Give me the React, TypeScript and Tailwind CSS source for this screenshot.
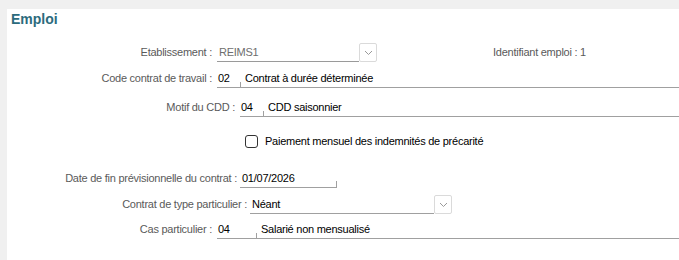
import React from "react";

const Chevron = () => (
  <svg width="9" height="6" viewBox="0 0 9 6" fill="none">
    <path d="M1 1 L4.5 4.5 L8 1" stroke="#9a9a9a" strokeWidth="1" />
  </svg>
);

const DropBtn = () => (
  <div className="w-[18px] h-[19px] border border-[#dadada] rounded-[2px] flex items-center justify-center bg-white">
    <Chevron />
  </div>
);

const Tick = () => <div className="self-end h-[5px] w-px bg-[#a0a0a0]" />;

export default function App() {
  return (
    <div className="w-[679px] h-[260px] bg-[#f0f0f0] pt-[9px] pl-[7px] font-['Liberation_Sans',Arial,sans-serif] text-[11px] tracking-[-0.25px] overflow-hidden">
      <div className="bg-white h-full flex flex-col">
        <div className="h-[34px] pl-[4px] pt-[1px] text-[14px] leading-[18px] font-bold tracking-normal text-[#2c6b7d]">Emploi</div>

        {/* Row 1 */}
        <div className="flex h-[19px] items-center">
          <div className="w-[205px] text-right text-[#5a5a5a]">Etablissement :</div>
          <div className="ml-[5px] w-[142px] h-[19px] border-b border-[#9a9a9a] flex items-center pl-[2px] text-[#6e6e6e]">REIMS1</div>
          <DropBtn />
          <div className="ml-[116px] text-[#5a5a5a]">Identifiant emploi : 1</div>
        </div>

        {/* Row 2 */}
        <div className="mt-[7px] flex h-[19px] items-center">
          <div className="w-[205px] text-right text-[#5a5a5a]">Code contrat de travail :</div>
          <div className="ml-[5px] flex-1 h-[19px] border-b border-[#a0a0a0] flex items-center text-black">
            <span className="w-[23px] pl-[1px]">02</span>
            <Tick />
            <span className="pl-[4px]">Contrat à durée déterminée</span>
          </div>
        </div>

        {/* Row 3 */}
        <div className="mt-[10px] flex h-[19px] items-center">
          <div className="w-[228px] text-right text-[#5a5a5a]">Motif du CDD :</div>
          <div className="ml-[5px] flex-1 h-[19px] border-b border-[#a0a0a0] flex items-center text-black">
            <span className="w-[23px] pl-[1px]">04</span>
            <Tick />
            <span className="pl-[4px]">CDD saisonnier</span>
          </div>
        </div>

        {/* Checkbox */}
        <div className="mt-[18px] flex h-[13px] items-center">
          <div className="ml-[238px] w-[13px] h-[13px] border border-[#333] rounded-[3px] bg-white" />
          <span className="ml-[7px] text-black">Paiement mensuel des indemnités de précarité</span>
        </div>

        {/* Date */}
        <div className="mt-[21px] flex h-[19px] items-center">
          <div className="w-[230px] text-right text-[#5a5a5a]">Date de fin prévisionnelle du contrat :</div>
          <div className="ml-[3px] w-[97px] h-[19px] border-b border-[#a0a0a0] flex items-center text-black">
            <span className="pl-[2px]">01/07/2026</span>
            <div className="flex-1" />
            <div className="self-end h-[6px] w-px bg-[#a0a0a0]" />
          </div>
        </div>

        {/* Row 6 */}
        <div className="mt-[7px] flex h-[19px] items-center">
          <div className="w-[240px] text-right text-[#5a5a5a]">Contrat de type particulier :</div>
          <div className="ml-[3px] w-[184px] h-[19px] border-b border-[#a0a0a0] flex items-center pl-[2px] text-black">Néant</div>
          <DropBtn />
        </div>

        {/* Row 7 */}
        <div className="mt-[6px] flex h-[19px] items-center">
          <div className="w-[205px] text-right text-[#5a5a5a]">Cas particulier :</div>
          <div className="ml-[5px] flex-1 h-[19px] border-b border-[#a0a0a0] flex items-center text-black">
            <span className="w-[39px] pl-[1px]">04</span>
            <Tick />
            <span className="pl-[4px]">Salarié non mensualisé</span>
          </div>
        </div>
      </div>
    </div>
  );
}
